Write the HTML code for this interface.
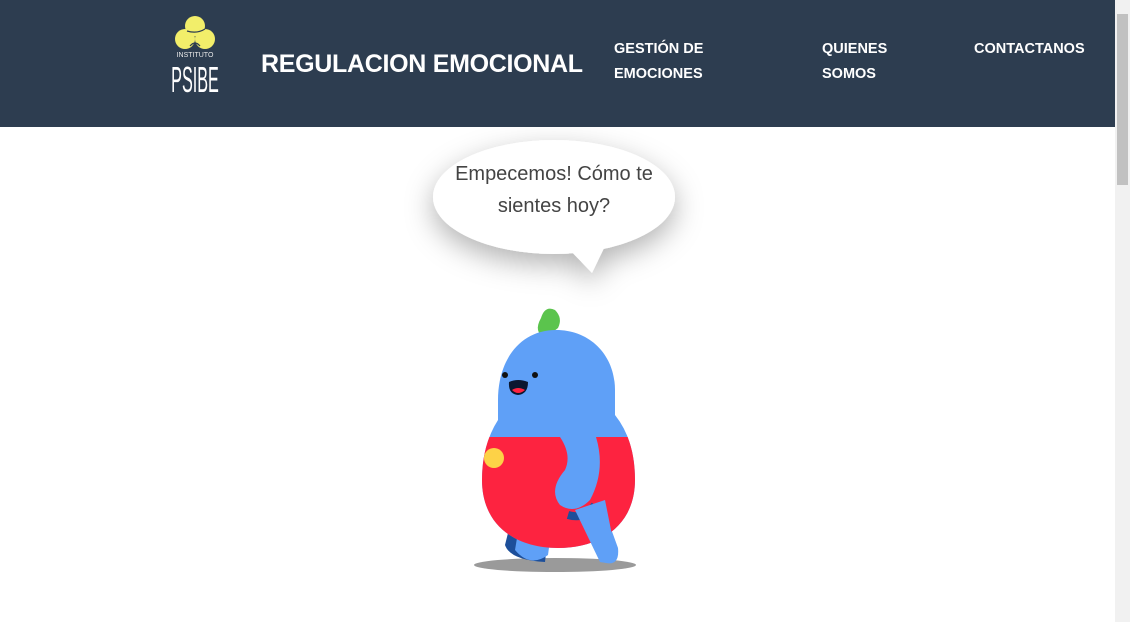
<!DOCTYPE html>
<html><head><meta charset="utf-8"><style>
*{margin:0;padding:0;box-sizing:border-box}
body{width:1130px;height:622px;overflow:hidden;background:#fff;font-family:"Liberation Sans",sans-serif;position:relative}
.nav{position:absolute;left:0;top:0;width:1115px;height:127px;background:#2d3d50;color:#fff}
.t{position:absolute;font-weight:bold}
.sb{position:absolute;left:1115px;top:0;width:15px;height:622px;background:#f1f1f1}
.th{position:absolute;left:1117px;top:14px;width:11px;height:171px;background:#c1c1c1}
</style></head><body>
<div class="nav">
<svg style="position:absolute;left:168px;top:12px" width="56" height="84">
<circle cx="27" cy="14" r="10" fill="#f2ee6a"/><circle cx="17" cy="27" r="10" fill="#f2ee6a"/><circle cx="37" cy="27" r="10" fill="#f2ee6a"/>
<path d="M19 19 Q29 22 37 17" stroke="#2d3d50" stroke-width="1.2" fill="none"/>
<path d="M22 34 Q27 28 32 34" stroke="#2d3d50" stroke-width="1.2" fill="none"/>
<text x="27" y="45" fill="#e8e8e8" font-size="7" text-anchor="middle" font-family="Liberation Sans">INSTITUTO</text>
<g transform="translate(27,80) scale(0.45,1)"><text x="0" y="0" fill="#fff" font-size="36" text-anchor="middle" font-family="Liberation Sans">PSIBE</text></g>
</svg>
<div class="t" style="left:261px;top:50px;font-size:25px;letter-spacing:-0.3px">REGULACION EMOCIONAL</div>
<div class="t" style="left:614px;top:37px;font-size:14.5px;line-height:25px">GESTIÓN DE<br>EMOCIONES</div>
<div class="t" style="left:822px;top:37px;font-size:14.5px;line-height:25px">QUIENES<br>SOMOS</div>
<div class="t" style="left:974px;top:39px;font-size:14.5px;line-height:20px">CONTACTANOS</div>
</div>
<svg style="position:absolute;left:0;top:0" width="1115" height="622">
<defs><filter id="f" x="-50%" y="-50%" width="200%" height="200%"><feDropShadow dx="0" dy="10" stdDeviation="14" flood-color="#000" flood-opacity="0.3"/></filter>
<clipPath id="c"><rect x="400" y="437" width="300" height="200"/></clipPath></defs>
<g filter="url(#f)"><ellipse cx="554" cy="197" rx="121" ry="57" fill="#fff"/><path d="M568 248 L592 273 L606 244 Z" fill="#fff"/></g>
<text x="554" y="180" font-size="20" fill="#444" text-anchor="middle" font-family="Liberation Sans">Empecemos! Cómo te</text>
<text x="554" y="212" font-size="20" fill="#444" text-anchor="middle" font-family="Liberation Sans">sientes hoy?</text>
<ellipse cx="555" cy="565" rx="81" ry="7" fill="#9a9a9a"/>
<path d="M510 525 L505 545 Q510 560 545 562 L548 535Z" fill="#1d4f9a"/>
<path d="M520 520 L515 550 Q530 568 548 555 L552 525Z" fill="#5fa0f7"/>
<path d="M597 490 L618 548 Q620 568 602 562 L580 510Z" fill="#5fa0f7"/>
<path d="M541 318 Q545 305 555 310 Q563 318 558 328 L545 338 Q533 332 541 318Z" fill="#5bc44d"/>
<path d="M556 330 C520 330 498 360 498 400 L498 420 Q482 445 482 480 C482 525 515 548 558 548 C601 548 635 525 635 480 Q635 440 615 415 L615 390 C615 355 590 330 556 330Z" fill="#5fa0f7"/>
<path d="M556 330 C520 330 498 360 498 400 L498 420 Q482 445 482 480 C482 525 515 548 558 548 C601 548 635 525 635 480 Q635 440 615 415 L615 390 C615 355 590 330 556 330Z" fill="#fd2340" clip-path="url(#c)"/>
<circle cx="494" cy="458" r="10" fill="#fdd247"/>
<path d="M595 505 Q585 520 568 515" stroke="#1d4f9a" stroke-width="8" fill="none"/>
<path d="M560 437 L596 437 Q606 470 590 500 Q575 515 560 505 Q548 490 565 470 Q572 455 560 437Z" fill="#5fa0f7"/>
<path d="M575 510 L605 500 L615 550 Q612 565 600 562Z" fill="#5fa0f7"/>
<circle cx="505" cy="375" r="3" fill="#111"/><circle cx="535" cy="375" r="3" fill="#111"/>
<path d="M509 382 Q518 378 528 382 Q528 394 518 395 Q508 394 509 382Z" fill="#0b1730"/>
<path d="M512 390 Q518 386 525 390 Q518 396 512 390Z" fill="#fd2340"/>
</svg>
<div class="sb"></div><div class="th"></div>
</body></html>
